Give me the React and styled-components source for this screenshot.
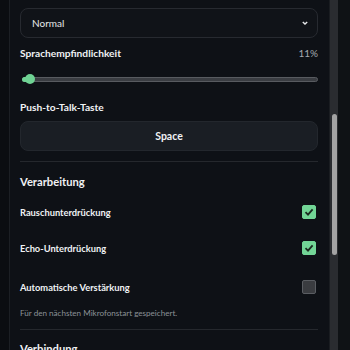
import React, { useState } from 'react';
import styled, { createGlobalStyle } from 'styled-components';

const GlobalStyle = createGlobalStyle`
  html, body {
    margin: 0;
    padding: 0;
    background: #0b0d11;
    font-family: Lato, "Noto Sans", sans-serif;
    color: #e8eaed;
  }
`;

const Frame = styled.div`
  display: flex;
  width: 350px;
  height: 350px;
  overflow: hidden;
  background: #0b0d11;
`;

const Gutter = styled.div`
  width: 9px;
  flex-shrink: 0;
  background: #0b0d11;
  border-right: 1px solid #1c1f24;
`;

const Panel = styled.div`
  flex: 1;
  display: flex;
  flex-direction: column;
  padding: 8px 11px 0 10px;
  background: #0e1116;
  overflow: hidden;
`;

const Track = styled.div`
  width: 8px;
  flex-shrink: 0;
  background: #2a2c30;
  border-left: 1px solid #1a1d21;
  display: flex;
  justify-content: center;
`;

const Thumb = styled.div`
  width: 5px;
  height: 141px;
  margin-top: 114px;
  border-radius: 3px;
  background: #a3a3a3;
`;

const Outside = styled.div`
  width: 12px;
  flex-shrink: 0;
  background: #0f1215;
`;

const SelectBox = styled.div`
  height: 30px;
  box-sizing: border-box;
  flex-shrink: 0;
  display: flex;
  align-items: center;
  justify-content: space-between;
  padding: 0 8px 0 11px;
  border: 1px solid #272a30;
  border-radius: 8px;
  background: #101318;
  font-size: 10px;
  color: #e6e8ea;
`;

const Row = styled.div`
  display: flex;
  justify-content: space-between;
  align-items: center;
  flex-shrink: 0;
  height: ${p => p.$h || 14}px;
  margin-top: ${p => p.$top || 0}px;
`;

const Label = styled.div`
  font-size: 10.2px;
  font-weight: 700;
  color: #f0f2f4;
`;

const Value = styled.div`
  font-size: 10px;
  color: #a4a9b0;
`;

const SliderWrap = styled.div`
  position: relative;
  flex-shrink: 0;
  height: 12px;
  margin: 13px 0 0 2px;
  display: flex;
  align-items: center;
`;

const SliderBar = styled.div`
  flex: 1;
  height: 3px;
  border-radius: 3px;
  background: #3a3d42;
  border: 1px solid #585b60;
`;

const SliderFill = styled.div`
  position: absolute;
  left: 0;
  top: 4px;
  height: 5px;
  border-radius: 3px;
  background: #6fd394;
`;

const SliderKnob = styled.div`
  position: absolute;
  top: 1px;
  width: 10px;
  height: 10px;
  border-radius: 50%;
  background: #6fd394;
`;

const KeyButton = styled.button`
  height: 30px;
  flex-shrink: 0;
  margin-top: 7px;
  border: 1px solid #23272d;
  border-radius: 8px;
  background: #1a1e24;
  color: #f0f2f4;
  font-family: inherit;
  font-size: 10.5px;
  font-weight: 700;
`;

const Divider = styled.hr`
  flex-shrink: 0;
  margin: ${p => p.$top}px 0 0;
  border: 0;
  border-top: 1px solid #25282d;
`;

const SectionTitle = styled.div`
  font-size: 11.2px;
  font-weight: 700;
  color: #f0f2f4;
`;

const ToggleLabel = styled.span`
  font-size: 9.3px;
  font-weight: 700;
  color: #f0f2f4;
`;

const Box = styled.span`
  width: 14px;
  height: 14px;
  margin-right: 2px;
  border-radius: 2px;
  box-sizing: border-box;
  display: flex;
  align-items: center;
  justify-content: center;
  background: ${p => (p.$on ? '#72d596' : '#3a3c40')};
  border: 1px solid ${p => (p.$on ? '#72d596' : '#5a5d62')};
`;

const Hint = styled.div`
  font-size: 8.1px;
  color: #8c9197;
`;

function Check({ on, onClick }) {
  return (
    <Box $on={on} onClick={onClick}>
      {on && (
        <svg width="10" height="10" viewBox="0 0 10 10">
          <path d="M1.5 5.2 L4 7.6 L8.6 2.4" fill="none" stroke="#1b2a20" strokeWidth="1.8" />
        </svg>
      )}
    </Box>
  );
}

export default function App() {
  const [toggles, setToggles] = useState({ noise: true, echo: true, agc: false });
  const sens = 11;

  function flip(key) {
    setToggles(t => ({ ...t, [key]: !t[key] }));
  }

  return (
    <Frame>
      <GlobalStyle />
      <Gutter />
      <Panel>
        <SelectBox>
          <span>Normal</span>
          <svg width="8" height="8" viewBox="0 0 8 8">
            <path d="M1.8 3 L4 5.1 L6.2 3" fill="none" stroke="#e6e8ea" strokeWidth="1.4" />
          </svg>
        </SelectBox>

        <Row $top={8}>
          <Label>Sprachempfindlichkeit</Label>
          <Value>{sens}%</Value>
        </Row>
        <SliderWrap>
          <SliderBar />
          <SliderFill style={{ width: `${(sens / 100) * 75}px` }} />
          <SliderKnob style={{ left: `${(sens / 100) * 75 - 5}px` }} />
        </SliderWrap>

        <Row $top={15}>
          <Label>Push-to-Talk-Taste</Label>
        </Row>
        <KeyButton>Space</KeyButton>

        <Divider $top={10} />
        <Row $top={12}>
          <SectionTitle>Verarbeitung</SectionTitle>
        </Row>

        <Row $top={16} $h={16} as="label">
          <ToggleLabel>Rauschunterdrückung</ToggleLabel>
          <Check on={toggles.noise} onClick={() => flip('noise')} />
        </Row>
        <Row $top={20} $h={16} as="label">
          <ToggleLabel>Echo-Unterdrückung</ToggleLabel>
          <Check on={toggles.echo} onClick={() => flip('echo')} />
        </Row>
        <Row $top={23} $h={16} as="label">
          <ToggleLabel>Automatische Verstärkung</ToggleLabel>
          <Check on={toggles.agc} onClick={() => flip('agc')} />
        </Row>
        <Row $top={12} $h={12}>
          <Hint>Für den nächsten Mikrofonstart gespeichert.</Hint>
        </Row>

        <Divider $top={10} />
        <Row $top={11}>
          <SectionTitle>Verbindung</SectionTitle>
        </Row>
      </Panel>
      <Track>
        <Thumb />
      </Track>
      <Outside />
    </Frame>
  );
}
